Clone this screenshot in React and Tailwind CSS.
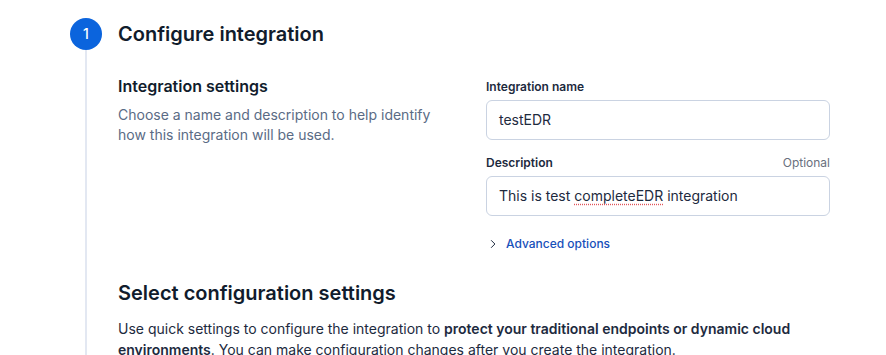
import React from "react";

const Field = ({ label, optional, children }) => (
  <div>
    <div className="mb-[3px] flex items-center justify-between text-xs leading-5">
      <span className="font-semibold text-[#1d2a3e]">{label}</span>
      {optional && <span className="text-[#69707d]">Optional</span>}
    </div>
    <div className="flex h-10 items-center rounded-md border border-[#cad3e2] bg-white px-3 text-sm text-[#1d2a3e]">
      {children}
    </div>
  </div>
);

export default function App() {
  return (
    <div
      className="h-[355px] overflow-hidden bg-white pl-[70px] pt-[18px]"
      style={{ fontFamily: "Inter, 'Noto Sans', sans-serif" }}
    >
      <div className="flex gap-4">
        <div className="flex w-8 shrink-0 flex-col items-center">
          <div className="flex h-8 w-8 items-center justify-center rounded-full bg-[#0b64dd] text-sm font-medium text-white">
            1
          </div>
          <div className="w-[2px] grow bg-[#e3e8f2]" />
        </div>
        <div className="w-[712px] pb-4">
          <h2 className="text-xl leading-8 font-semibold text-[#111c2c]">
            Configure integration
          </h2>

          <div className="mt-6 flex gap-9">
            <div className="w-[332px]">
              <h3 className="text-base leading-6 font-semibold text-[#111c2c]">
                Integration settings
              </h3>
              <p className="mt-[7px] text-sm leading-5 text-[#5a6b85]">
                Choose a name and description to help identify how this
                integration will be used.
              </p>
            </div>
            <div className="flex w-[344px] flex-col gap-[13px] pt-[3px]">
              <Field label="Integration name">testEDR</Field>
              <Field label="Description" optional>
                <span>
                  This is test{" "}
                  <span className="underline decoration-dotted decoration-[#e0555c] underline-offset-[3px]">
                    completeEDR
                  </span>{" "}
                  integration
                </span>
              </Field>
              <div className="mt-[7px] flex items-center gap-[8px] pl-[2px] text-xs leading-4 font-medium text-[#1750ba]">
                <svg
                  width="10"
                  height="10"
                  viewBox="0 0 16 16"
                  fill="none"
                  stroke="#1d2a3e"
                  strokeWidth="1.6"
                >
                  <path d="M5 2l6 6-6 6" />
                </svg>
                <span>Advanced options</span>
              </div>
            </div>
          </div>

          <h2 className="mt-[25px] text-xl leading-8 font-semibold text-[#111c2c]">
            Select configuration settings
          </h2>
          <p className="mt-[9px] text-sm leading-[21px] text-[#1d2a3e]">
            Use quick settings to configure the integration to{" "}
            <span className="font-semibold">
              protect your traditional endpoints or dynamic cloud environments
            </span>
            . You can make configuration changes after you create the
            integration.
          </p>
        </div>
      </div>
    </div>
  );
}
